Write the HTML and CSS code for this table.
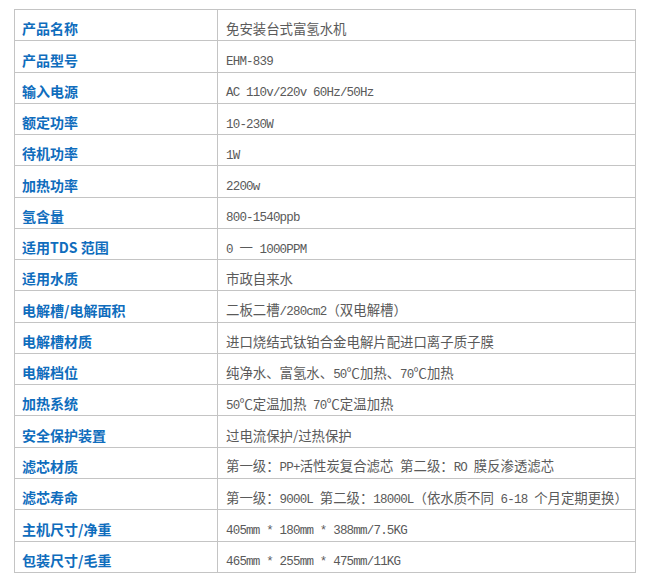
FILE: index.html
```html
<!DOCTYPE html>
<html lang="zh-CN">
<head>
<meta charset="utf-8">
<title>产品参数</title>
<link rel="stylesheet" href="styles.css">
</head>
<body>
<div class="wrap">
<table class="spec">
<colgroup><col class="c1"><col class="c2"></colgroup>
<tbody>
<tr><th>产品名称</th><td>免安装台式富氢水机</td></tr>
<tr><th>产品型号</th><td><span class="en">EHM-839</span></td></tr>
<tr><th>输入电源</th><td><span class="en">AC 110v/220v 60Hz/50Hz</span></td></tr>
<tr><th>额定功率</th><td><span class="en">10-230W</span></td></tr>
<tr><th>待机功率</th><td><span class="en">1W</span></td></tr>
<tr><th>加热功率</th><td><span class="en">2200w</span></td></tr>
<tr><th>氢含量</th><td><span class="en">800-1540ppb</span></td></tr>
<tr><th>适用TDS 范围</th><td><span class="en">0 </span>一<span class="en"> 1000PPM</span></td></tr>
<tr><th>适用水质</th><td>市政自来水</td></tr>
<tr><th>电解槽/电解面积</th><td>二板二槽<span class="en">/280cm2</span>（双电解槽）</td></tr>
<tr><th>电解槽材质</th><td>进口烧结式钛铂合金电解片配进口离子质子膜</td></tr>
<tr><th>电解档位</th><td>纯净水、富氢水、<span class="en">50</span>℃加热、<span class="en">70</span>℃加热</td></tr>
<tr><th>加热系统</th><td><span class="en">50</span>℃定温加热<span class="en"> 70</span>℃定温加热</td></tr>
<tr><th>安全保护装置</th><td>过电流保护/过热保护</td></tr>
<tr><th>滤芯材质</th><td>第一级：<span class="en">PP+</span>活性炭复合滤芯<span class="en"> </span>第二级：<span class="en">RO </span>膜反渗透滤芯</td></tr>
<tr><th>滤芯寿命</th><td>第一级：<span class="en">9000L </span>第二级：<span class="en">18000L</span>（依水质不同<span class="en"> 6-18 </span>个月定期更换）</td></tr>
<tr><th>主机尺寸/净重</th><td><span class="en">405mm * 180mm * 388mm/7.5KG</span></td></tr>
<tr><th>包装尺寸/毛重</th><td><span class="en">465mm * 255mm * 475mm/11KG</span></td></tr>
</tbody>
</table>
</div>
</body>
</html>
```
FILE: styles.css
```css
html, body {
  margin: 0;
  padding: 0;
  background: #ffffff;
}
.wrap {
  padding: 9px 0 0 14px;
}
.spec {
  border-collapse: collapse;
  width: 622px;
  table-layout: fixed;
  border: 1px solid #c4c4c4;
}
.c1 { width: 203px; }
.spec th, .spec td {
  border: 1px solid #c4c4c4;
  height: 27.28px;
  padding: 0 0 3px 7px;
  vertical-align: bottom;
  text-align: left;
  line-height: 17px;
  white-space: nowrap;
}
.spec th {
  font-family: "Noto Sans CJK SC", sans-serif;
  font-weight: bold;
  font-size: 14px;
  color: #0f6dbd;
}
.spec td {
  padding-left: 8px;
  font-family: "Noto Sans CJK SC", sans-serif;
  font-size: 13.4px;
  color: #5a5a5a;
}
.spec .en {
  font-family: "Liberation Mono", monospace;
  font-size: 12.5px;
  letter-spacing: -0.8px;
  line-height: 1;
}
```
